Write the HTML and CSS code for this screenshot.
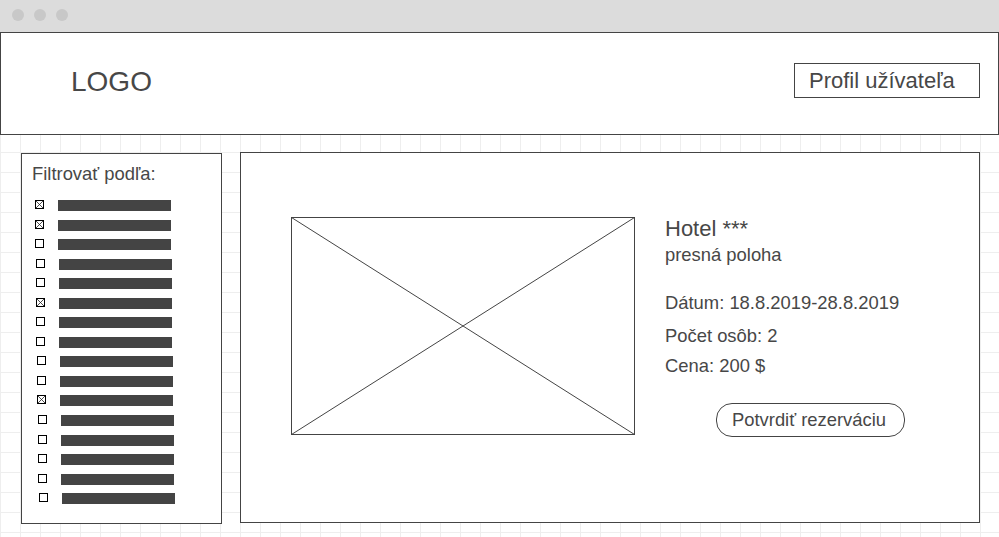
FILE: index.html
```html
<!DOCTYPE html>
<html lang="sk">
<head>
<meta charset="utf-8">
<title>Rezervácia hotela</title>
<link rel="stylesheet" href="styles.css">
</head>
<body>
<div class="titlebar">
  <span class="dot"></span><span class="dot"></span><span class="dot"></span>
</div>
<header class="topbar">
  <div class="logo">LOGO</div>
  <button class="profile">Profil užívateľa</button>
</header>
<main class="content">
  <aside class="filters">
    <div class="filters-title">Filtrovať podľa:</div>
    <ul class="filter-list">
      <li class="filter-row"><svg class="cb" width="9" height="9" viewBox="0 0 9 9"><rect x="0.5" y="0.5" width="8" height="8"/><path d="M1 1L8 8M8 1L1 8"/></svg><span class="bar"></span></li>
      <li class="filter-row"><svg class="cb" width="9" height="9" viewBox="0 0 9 9"><rect x="0.5" y="0.5" width="8" height="8"/><path d="M1 1L8 8M8 1L1 8"/></svg><span class="bar"></span></li>
      <li class="filter-row"><svg class="cb" width="9" height="9" viewBox="0 0 9 9"><rect x="0.5" y="0.5" width="8" height="8"/></svg><span class="bar"></span></li>
      <li class="filter-row"><svg class="cb" width="9" height="9" viewBox="0 0 9 9"><rect x="0.5" y="0.5" width="8" height="8"/></svg><span class="bar"></span></li>
      <li class="filter-row"><svg class="cb" width="9" height="9" viewBox="0 0 9 9"><rect x="0.5" y="0.5" width="8" height="8"/></svg><span class="bar"></span></li>
      <li class="filter-row"><svg class="cb" width="9" height="9" viewBox="0 0 9 9"><rect x="0.5" y="0.5" width="8" height="8"/><path d="M1 1L8 8M8 1L1 8"/></svg><span class="bar"></span></li>
      <li class="filter-row"><svg class="cb" width="9" height="9" viewBox="0 0 9 9"><rect x="0.5" y="0.5" width="8" height="8"/></svg><span class="bar"></span></li>
      <li class="filter-row"><svg class="cb" width="9" height="9" viewBox="0 0 9 9"><rect x="0.5" y="0.5" width="8" height="8"/></svg><span class="bar"></span></li>
      <li class="filter-row"><svg class="cb" width="9" height="9" viewBox="0 0 9 9"><rect x="0.5" y="0.5" width="8" height="8"/></svg><span class="bar"></span></li>
      <li class="filter-row"><svg class="cb" width="9" height="9" viewBox="0 0 9 9"><rect x="0.5" y="0.5" width="8" height="8"/></svg><span class="bar"></span></li>
      <li class="filter-row"><svg class="cb" width="9" height="9" viewBox="0 0 9 9"><rect x="0.5" y="0.5" width="8" height="8"/><path d="M1 1L8 8M8 1L1 8"/></svg><span class="bar"></span></li>
      <li class="filter-row"><svg class="cb" width="9" height="9" viewBox="0 0 9 9"><rect x="0.5" y="0.5" width="8" height="8"/></svg><span class="bar"></span></li>
      <li class="filter-row"><svg class="cb" width="9" height="9" viewBox="0 0 9 9"><rect x="0.5" y="0.5" width="8" height="8"/></svg><span class="bar"></span></li>
      <li class="filter-row"><svg class="cb" width="9" height="9" viewBox="0 0 9 9"><rect x="0.5" y="0.5" width="8" height="8"/></svg><span class="bar"></span></li>
      <li class="filter-row"><svg class="cb" width="9" height="9" viewBox="0 0 9 9"><rect x="0.5" y="0.5" width="8" height="8"/></svg><span class="bar"></span></li>
      <li class="filter-row"><svg class="cb" width="9" height="9" viewBox="0 0 9 9"><rect x="0.5" y="0.5" width="8" height="8"/></svg><span class="bar"></span></li>
    </ul>
  </aside>
  <section class="hotel-card">
    <svg class="photo" width="344" height="218" viewBox="0 0 344 218">
      <rect x="0.5" y="0.5" width="343" height="217"/>
      <path d="M0.5 0.5L343.5 217.5M343.5 0.5L0.5 217.5"/>
    </svg>
    <div class="info">
      <div class="hotel-name">Hotel ***</div>
      <div class="hotel-location">presná poloha</div>
      <div class="detail detail-date">Dátum: 18.8.2019-28.8.2019</div>
      <div class="detail detail-persons">Počet osôb: 2</div>
      <div class="detail detail-price">Cena: 200 $</div>
      <button class="confirm">Potvrdiť rezerváciu</button>
    </div>
  </section>
</main>
</body>
</html>
```
FILE: styles.css
```css
* { box-sizing: border-box; }

html, body {
  margin: 0;
  padding: 0;
}

body {
  width: 999px;
  height: 537px;
  overflow: hidden;
  font-family: "Liberation Sans", Arial, sans-serif;
  color: #474747;
  background-color: #fff;
  background-image:
    linear-gradient(to right, #eeeeee 1px, transparent 1px),
    linear-gradient(to bottom, #eeeeee 1px, transparent 1px);
  background-size: 20px 20px, 20px 20px;
  background-position: 0 0, 0 12px;
}

.titlebar {
  height: 32px;
  background: #dcdcdc;
  display: flex;
  align-items: flex-start;
  gap: 10px;
  padding: 9px 0 0 12px;
}

.dot {
  width: 12px;
  height: 12px;
  border-radius: 50%;
  background: #c8c8c8;
}

.topbar {
  height: 103px;
  border: 1px solid #444;
  background: #fff;
  display: flex;
  align-items: flex-start;
  justify-content: space-between;
  padding: 30px 18px 0 70px;
}

.logo {
  font-size: 28px;
  line-height: 32px;
  margin-top: 3px;
}

.profile {
  width: 186px;
  height: 35px;
  border: 1px solid #444;
  background: #fff;
  border-radius: 0;
  padding: 0 0 0 14px;
  margin: 0;
  text-align: left;
  font-family: "Liberation Sans", Arial, sans-serif;
  font-size: 22px;
  line-height: 31px;
  color: #474747;
}

.content {
  display: flex;
  align-items: flex-start;
  gap: 18px;
  padding: 17px 0 0 21px;
}

.filters {
  width: 201px;
  height: 371px;
  margin-top: 1px;
  border: 1px solid #444;
  background: #fff;
  padding: 9px 0 0 13px;
}

.filters-title {
  font-size: 18.4px;
  line-height: 22px;
  margin-left: -3px;
}

.filter-list {
  list-style: none;
  margin: 15px 0 0 0;
  padding: 0;
}

.filter-row {
  height: 19.55px;
  display: flex;
  align-items: flex-start;
}

.filter-row:nth-child(n+4) { margin-left: 1px; }
.filter-row:nth-child(n+9) { margin-left: 2px; }
.filter-row:nth-child(n+12) { margin-left: 3px; }
.filter-row:nth-child(n+16) { margin-left: 4px; }

.cb {
  flex: none;
  display: block;
  margin-right: 14px;
}

.cb rect {
  fill: #fff;
  stroke: #000;
  stroke-width: 1;
}

.cb path {
  stroke: #222;
  stroke-width: 0.8;
  fill: none;
}

.bar {
  display: block;
  width: 113px;
  height: 11px;
  background: #444;
}

.hotel-card {
  width: 740px;
  height: 371px;
  border: 1px solid #444;
  background: #fff;
  display: flex;
  align-items: flex-start;
  gap: 30px;
  padding: 0 0 0 50px;
}

.photo {
  flex: none;
  display: block;
  margin-top: 64px;
}

.photo rect,
.photo path {
  fill: none;
  stroke: #444;
  stroke-width: 1;
}

.info {
  margin-top: 63px;
  display: flex;
  flex-direction: column;
  align-items: flex-start;
}

.hotel-name {
  font-size: 22px;
  line-height: 26px;
}

.hotel-location {
  font-size: 18.4px;
  line-height: 22px;
  margin-top: 2px;
}

.detail {
  font-size: 18.4px;
  line-height: 22px;
}

.detail-date { margin-top: 26px; }
.detail-persons { margin-top: 11px; }
.detail-price { margin-top: 8px; }

.confirm {
  margin: 26px 0 0 51px;
  width: 189px;
  height: 34px;
  border: 1px solid #444;
  border-radius: 16px;
  background: #fff;
  padding: 0 3px 0 0;
  font-family: "Liberation Sans", Arial, sans-serif;
  font-size: 18.4px;
  line-height: 30px;
  color: #474747;
  text-align: center;
}
```
